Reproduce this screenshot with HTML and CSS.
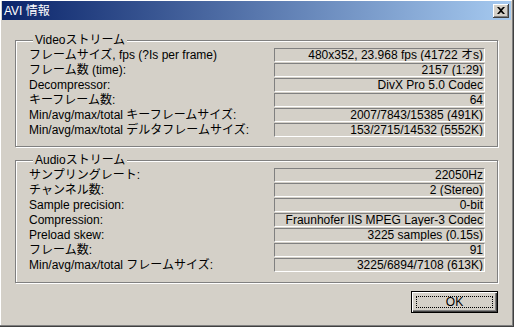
FILE: index.html
```html
<!DOCTYPE html>
<html lang="ja">
<head>
<meta charset="utf-8">
<title>AVI 情報</title>
<link rel="stylesheet" href="styles.css">
</head>
<body>
<div class="window">
  <div class="titlebar">
    <span class="title">AVI 情報</span>
    <span class="close"><svg width="8" height="7" viewBox="0 0 8 7"><path d="M0 0h2l2 2 2-2h2L5 3.5 8 7H6L4 5 2 7H0l3-3.5z" fill="#000"/></svg></span>
  </div>
  <div class="content">
    <fieldset class="group video">
      <legend>Videoストリーム</legend>
      <div class="rows">
        <div class="label">フレームサイズ, fps (?Is per frame)</div><div class="value">480x352, 23.968 fps (41722 オs)</div>
        <div class="label">フレーム数 (time):</div><div class="value">2157 (1:29)</div>
        <div class="label">Decompressor:</div><div class="value">DivX Pro 5.0 Codec</div>
        <div class="label">キーフレーム数:</div><div class="value">64</div>
        <div class="label">Min/avg/max/total キーフレームサイズ:</div><div class="value">2007/7843/15385 (491K)</div>
        <div class="label">Min/avg/max/total デルタフレームサイズ:</div><div class="value">153/2715/14532 (5552K)</div>
      </div>
    </fieldset>
    <fieldset class="group audio">
      <legend>Audioストリーム</legend>
      <div class="rows">
        <div class="label">サンプリングレート:</div><div class="value">22050Hz</div>
        <div class="label">チャンネル数:</div><div class="value">2 (Stereo)</div>
        <div class="label">Sample precision:</div><div class="value">0-bit</div>
        <div class="label">Compression:</div><div class="value">Fraunhofer IIS MPEG Layer-3 Codec</div>
        <div class="label">Preload skew:</div><div class="value">3225 samples (0.15s)</div>
        <div class="label">フレーム数:</div><div class="value">91</div>
        <div class="label">Min/avg/max/total フレームサイズ:</div><div class="value">3225/6894/7108 (613K)</div>
      </div>
    </fieldset>
    <div class="actions">
      <button class="ok" type="button"><span class="focus">OK</span></button>
    </div>
  </div>
</div>
</body>
</html>
```
FILE: styles.css
```css
html, body {
  margin: 0;
  padding: 0;
  background: #D4D0C8;
}
body {
  font: 12px "Liberation Sans", "Noto Sans CJK JP", sans-serif;
  color: #000;
}
.window {
  width: 514px;
  height: 327px;
  box-sizing: border-box;
  padding: 1px 3px 3px 2px;
  background: #D4D0C8;
  box-shadow: inset -1px -1px #404040, inset -2px -2px #808080, inset 1px 1px #fff;
  display: flex;
  flex-direction: column;
}
.titlebar {
  height: 19px;
  flex: none;
  display: flex;
  align-items: center;
  justify-content: space-between;
  padding: 0 2px 0 2px;
  background: linear-gradient(to right, #0A246A, #A6CAF0);
}
.title {
  color: #fff;
  font-size: 12px;
  line-height: 14px;
}
.close {
  width: 16px;
  height: 14px;
  box-sizing: border-box;
  display: flex;
  align-items: center;
  justify-content: center;
  background: #D4D0C8;
  box-shadow: inset -1px -1px #404040, inset 1px 1px #fff, inset -2px -2px #808080;
  padding-right: 1px;
}
.close svg {
  display: block;
}
.content {
  padding: 0 13px;
  display: flex;
  flex-direction: column;
}
.group {
  margin: 0;
  padding: 1px 12px 9px 13px;
  border: 1px solid #808080;
  box-shadow: inset 1px 1px #fff, 1px 1px #fff;
  min-width: 0;
}
.group legend {
  padding: 0 2px;
  margin-left: 4px;
  line-height: 13px;
  background: #D4D0C8;
}
.video {
  margin-top: 14px;
}
.audio {
  margin-top: 7px;
  padding-bottom: 10px;
}
.rows {
  display: grid;
  grid-template-columns: 1fr 211px;
  row-gap: 1px;
}
.label {
  height: 14px;
  line-height: 14px;
  white-space: nowrap;
}
.value {
  height: 14px;
  line-height: 13px;
  box-sizing: border-box;
  border-top: 1px solid #808080;
  border-left: 1px solid #808080;
  border-bottom: 1px solid #fff;
  border-right: 1px solid #fff;
  text-align: right;
  padding-right: 1px;
  white-space: nowrap;
  overflow: hidden;
}
.actions {
  display: flex;
  justify-content: flex-end;
  margin-top: 8px;
}
.ok {
  width: 87px;
  height: 22px;
  margin: 0;
  padding: 4px;
  font: inherit;
  color: #000;
  background: #D4D0C8;
  border: 1px solid #000;
  box-shadow: inset 1px 1px #fff, inset -1px -1px #404040, inset -2px -2px #808080;
  display: flex;
}
.focus {
  flex: 1;
  border: 1px dotted #000;
  display: flex;
  align-items: center;
  justify-content: center;
  line-height: 12px;
}
```
